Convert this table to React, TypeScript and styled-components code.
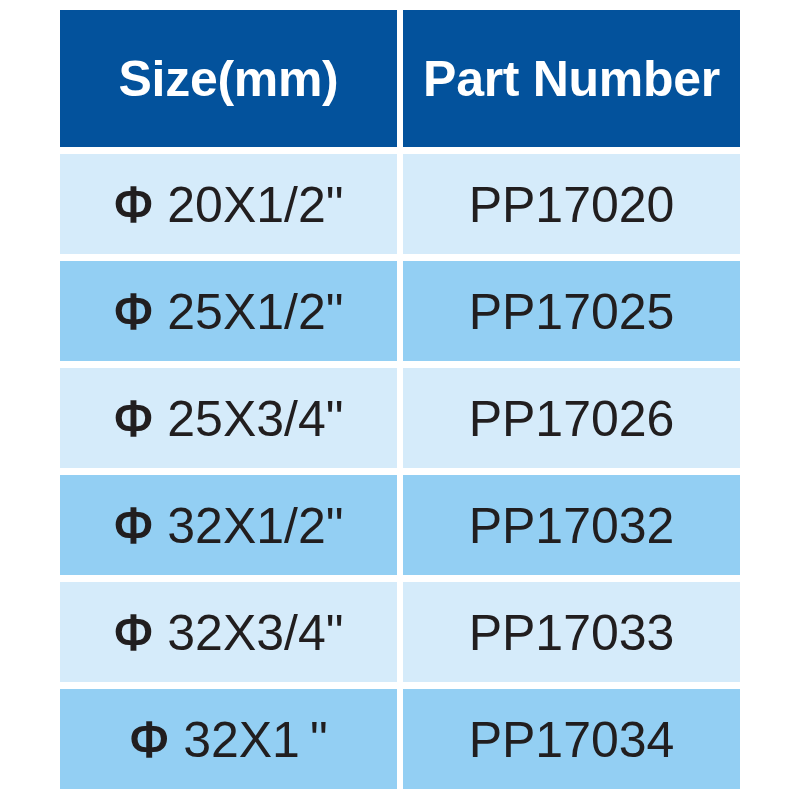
import React from "react";
import styled, { createGlobalStyle } from "styled-components";

const GlobalStyle = createGlobalStyle`
  html, body {
    margin: 0;
    padding: 0;
    background: #ffffff;
  }
  body {
    font-family: "Liberation Sans", Arial, Helvetica, sans-serif;
  }
`;

const Page = styled.div`
  width: 800px;
  height: 800px;
  padding: 10px 60px 0 60px;
  box-sizing: border-box;
`;

const Table = styled.div`
  display: grid;
  grid-template-columns: 337px 337px;
  grid-template-rows: 137px repeat(6, 100px);
  column-gap: 6px;
  row-gap: 7px;
`;

const HeadCell = styled.div`
  background: #03529c;
  color: #ffffff;
  font-weight: 700;
  font-size: 50px;
  display: flex;
  align-items: center;
  justify-content: center;
  letter-spacing: -0.3px;
`;

const Cell = styled.div<{ $dark: boolean }>`
  background: ${(p) => (p.$dark ? "#93cff3" : "#d5ebfa")};
  color: #211e1f;
  font-size: 50px;
  display: flex;
  align-items: center;
  justify-content: center;
  padding-top: 2px;
`;

const Phi = styled.span`
  font-weight: 400;
  -webkit-text-stroke: 1.4px #211e1f;
`;

const rows = [
  { size: '20X1/2"', part: "PP17020" },
  { size: '25X1/2"', part: "PP17025" },
  { size: '25X3/4"', part: "PP17026" },
  { size: '32X1/2"', part: "PP17032" },
  { size: '32X3/4"', part: "PP17033" },
  { size: '32X1\u2009"', part: "PP17034" },
];

export default function App() {
  return (
    <>
      <GlobalStyle />
      <Page>
        <Table>
          <HeadCell>Size(mm)</HeadCell>
          <HeadCell>Part Number</HeadCell>
          {rows.map((r, i) => (
            <React.Fragment key={r.part}>
              <Cell $dark={i % 2 === 1}>
                <Phi>Φ</Phi>&nbsp;{r.size}
              </Cell>
              <Cell $dark={i % 2 === 1}>{r.part}</Cell>
            </React.Fragment>
          ))}
        </Table>
      </Page>
    </>
  );
}
